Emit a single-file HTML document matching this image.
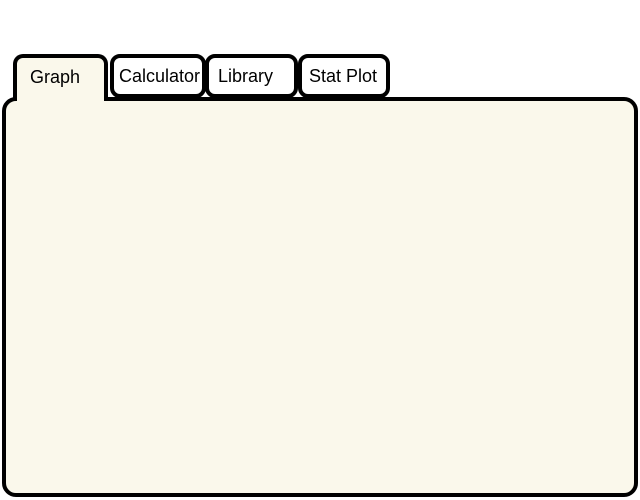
<!DOCTYPE html>
<html><head><style>
body{margin:0;width:640px;height:500px;background:#fff;position:relative;overflow:hidden;font-family:"Liberation Sans",Arial,sans-serif;}
.p{position:absolute;left:2px;top:97px;width:628px;height:392px;border:4px solid #000;border-radius:14px;background:#faf8eb;}
.t{position:absolute;top:54px;height:36px;border:4px solid #000;border-radius:10px;background:#fff;font-size:18px;line-height:36px;box-sizing:content-box;white-space:nowrap;overflow:hidden;}
.g{left:13px;width:87px;height:43px;background:#faf8eb;border-bottom:none;border-radius:10px 10px 0 0;line-height:38px;}
</style></head><body>
<div class="p"></div>
<div class="t" style="left:110px;width:88px;"><span style="padding-left:5px">Calculator</span></div>
<div class="t" style="left:205px;width:85px;"><span style="padding-left:9px">Library</span></div>
<div class="t" style="left:298px;width:84px;"><span style="padding-left:7px">Stat Plot</span></div>
<div class="t g"><span style="padding-left:13px">Graph</span></div>
</body></html>
